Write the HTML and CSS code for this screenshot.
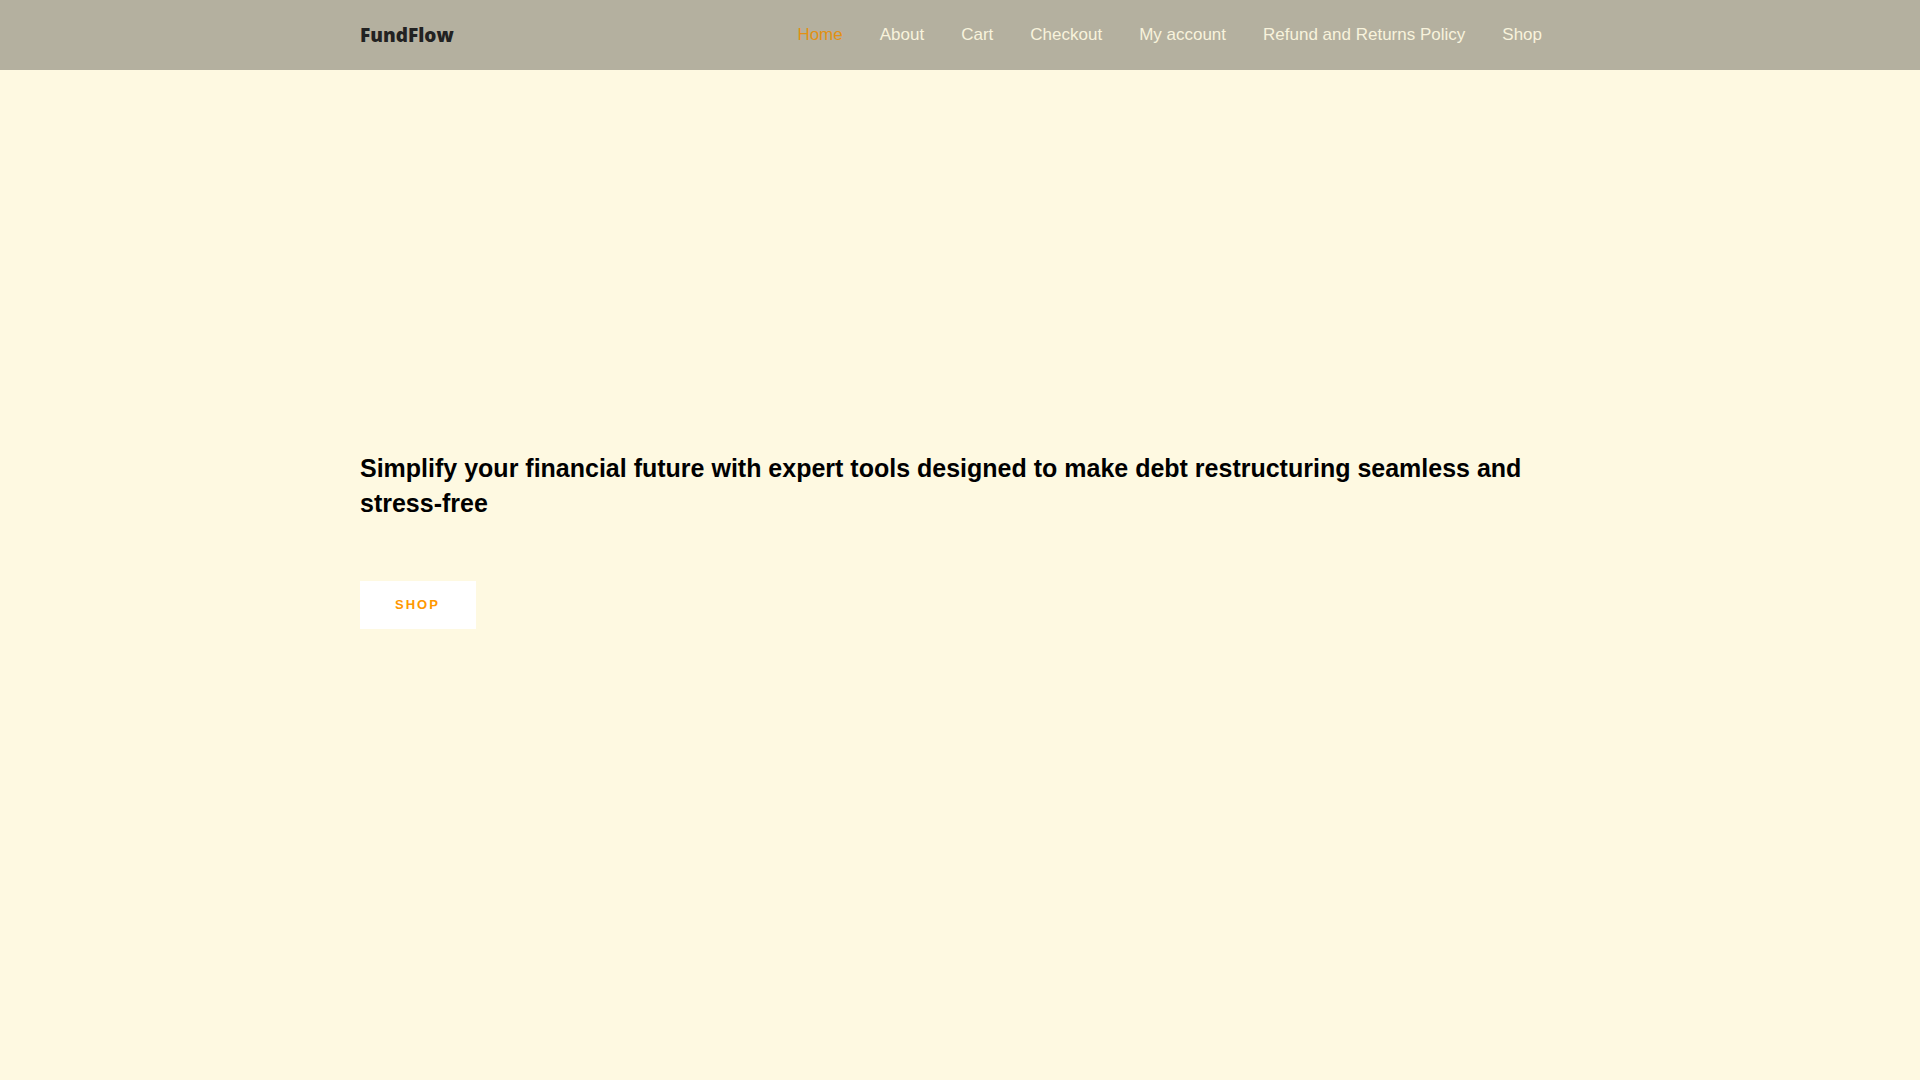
FILE: index.html
```html
<!DOCTYPE html>
<html lang="en">
<head>
    <meta charset="UTF-8">
    <meta name="viewport" content="width=device-width, initial-scale=1.0">
    <title>FundFlow</title>
    <link rel="stylesheet" href="styles.css">
</head>
<body>
    <header class="site-header">
        <div class="container header-inner">
            <a class="logo" href="#">FundFlow</a>
            <nav class="main-nav" aria-label="Main">
                <a class="nav-link active" href="#">Home</a>
                <a class="nav-link" href="#">About</a>
                <a class="nav-link" href="#">Cart</a>
                <a class="nav-link" href="#">Checkout</a>
                <a class="nav-link" href="#">My account</a>
                <a class="nav-link" href="#">Refund and Returns Policy</a>
                <a class="nav-link" href="#">Shop</a>
            </nav>
        </div>
    </header>

    <main class="hero">
        <div class="container">
            <h1>Simplify your financial future with expert tools designed to make debt restructuring seamless and stress-free</h1>
            <a class="btn" href="#">SHOP</a>
        </div>
    </main>
</body>
</html>
```

FILE: styles.css
```css
* { margin: 0; padding: 0; box-sizing: border-box; }
body { font-family: "Liberation Sans", Arial, sans-serif; background: #fef9e1; color: #000; }
a { text-decoration: none; }
.container { width: 100%; max-width: 1240px; margin: 0 auto; padding: 0 20px; }

/* Header sits over the top of the hero */
.site-header { position: absolute; top: 0; left: 0; right: 0; background: #b4b09f; }
.header-inner { display: flex; align-items: center; justify-content: space-between; min-height: 70px; }
.logo { font-family: "Open Sans", "Liberation Sans", sans-serif; font-size: 19px; font-weight: 800; line-height: 24px; color: #222; }
.main-nav { display: flex; flex-wrap: wrap; gap: 0 37px; padding-right: 18px; }
.nav-link { font-size: 17px; line-height: 24px; color: #f8f3dc; }
.nav-link.active { color: #e39113; }

.hero { display: flex; align-items: center; min-height: 100vh; }
.hero h1 { font-size: 25px; font-weight: 700; line-height: 35px; margin-bottom: 60px; }
.btn { display: inline-block; padding: 14px 36px 14px 35px; background: #fff; color: #ff9800; font-size: 13px; font-weight: 700; line-height: 20px; letter-spacing: 2px; vertical-align: top; }
```
